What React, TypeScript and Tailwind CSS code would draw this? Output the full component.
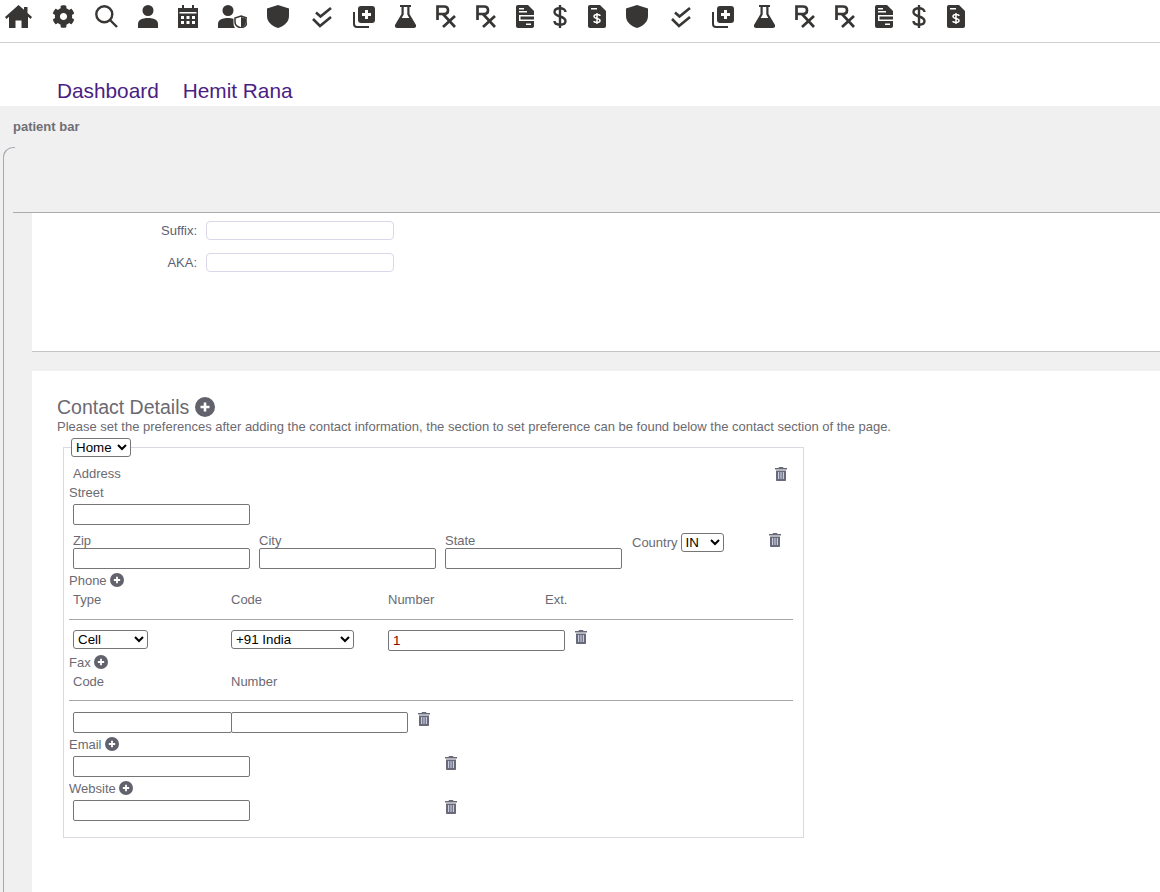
import { FaCog } from "react-icons/fa";

const ink = "#383634";

function Home() {
  return (
    <svg viewBox="0 0 27 23" className="h-[23px] w-[27px]" fill={ink}>
      <path d="M13.5 0L19 4.800V2h3.500v5.900L27 12l-1.500 1.900L23 11.800V23h-6.500v-7.500h-6V23H4V11.800l-2.500 2.100L0 12z" />
    </svg>
  );
}

function Search() {
  return (
    <svg viewBox="0 0 23 23" className="h-[23px] w-[23px]" fill="none" stroke={ink} strokeWidth="2.4">
      <circle cx="9.3" cy="9.3" r="8" />
      <path d="M15 15l7 7" />
    </svg>
  );
}

function Person() {
  return (
    <svg viewBox="0 0 20 23" className="h-[23px] w-[20px]" fill={ink}>
      <circle cx="10" cy="5.5" r="5.5" />
      <path d="M0 23v-4c0-4 4-6 10-6s10 2 10 6v4z" />
    </svg>
  );
}

function Calendar() {
  return (
    <svg viewBox="0 0 20 23" className="h-[23px] w-[20px]" fill={ink}>
      <path d="M4 0h2v3h8V0h2v3h4v20H0V3h4z" />
      <path
        fill="#fff"
        d="M1.5 7h17v1.5h-17zM3 11h3v3H3zM8.5 11h3v3h-3zM14 11h3v3h-3zM3 16h3v3H3zM8.5 16h3v3h-3zM14 16h3v3h-3z"
      />
    </svg>
  );
}

function PersonShield() {
  return (
    <svg viewBox="0 0 29 23" className="h-[23px] w-[29px]" fill={ink}>
      <circle cx="10" cy="5.5" r="5.5" />
      <path d="M0 23v-4c0-4 4-6 10-6 2 0 4 .2 5.5.8V18c0 2 .6 3.6 1.6 5z" />
      <path d="M23 11l6 2v4c0 3-2.5 5-6 6-3.5-1-6-3-6-6v-4z" fill="#fff" stroke={ink} strokeWidth="1.5" />
      <path d="M23 12v10.5c3-1 5-2.7 5-5.5v-3.5z" />
    </svg>
  );
}

function Shield() {
  return (
    <svg viewBox="0 0 22 23" className="h-[23px] w-[22px]" fill={ink}>
      <path d="M11 0l11 3.5V11c0 6-5 10-11 12C5 21 0 17 0 11V3.5z" />
    </svg>
  );
}

function Checks() {
  return (
    <svg viewBox="-3 0 24 23" className="h-[23px] w-[24px]" fill="none" stroke={ink} strokeWidth="2.6">
      <path d="M4 7.5l4.5 4L19 3" />
      <path d="M1 14l7 7 11-9" />
    </svg>
  );
}

function Library() {
  return (
    <svg viewBox="0 0 22 23" className="h-[23px] w-[22px]">
      <path d="M1 7v12c0 2 1 3 3 3h12" fill="none" stroke={ink} strokeWidth="2" />
      <rect x="5" y="1" width="17" height="17" rx="3" fill={ink} />
      <path d="M12 5h3v3h3v3h-3v3h-3v-3H9V8h3z" fill="#fff" />
    </svg>
  );
}

function Flask() {
  return (
    <svg viewBox="0 0 21 23" className="h-[23px] w-[21px]" fill={ink}>
      <path d="M5 0h11v2h-1.5v7L21 20c.6 1.5-.3 3-2 3H2c-1.700 0-2.6-1.500-2-3L6.500 9V2H5z" />
      <path d="M8.700 2h3.600v7.500l2 3.500H6.700l2-3.500z" fill="#fff" />
    </svg>
  );
}

function Rx() {
  return (
    <svg viewBox="0 0 20 23" className="h-[23px] w-[20px]" fill="none" stroke={ink} strokeWidth="2.7">
      <path d="M1.500 15V1.500H8c2.500 0 4 1.500 4 3.700s-1.500 3.800-4 3.800H1.500" />
      <path d="M7 9l12 13M19 11L7 22" />
    </svg>
  );
}

function Doc() {
  return (
    <svg viewBox="0 0 18 23" className="-mr-[1px] h-[23px] w-[18px]" fill={ink}>
      <path d="M2 0h10l6 6v15c0 1.200-.8 2-2 2H2c-1.200 0-2-.8-2-2V2C0 .8.800 0 2 0z" />
      <path fill="#fff" d="M3 3h5v1.500H3zM3 6h8v1.500H3zM3 10h15v6H3zM10 18.500h5V20h-5z" />
      <path d="M4.500 11.500H18v3H4.500z" />
    </svg>
  );
}

function Dollar() {
  return (
    <svg viewBox="0 0 14 23" className="mr-[1px] h-[23px] w-[14px]" fill="none" stroke={ink} strokeWidth="2.4">
      <path d="M12.500 7c0-2.500-2.500-3.700-5.500-3.700S1.500 4.500 1.500 7c0 5.500 11 3.500 11 9 0 2.500-2.500 3.700-5.500 3.700S1.500 18.500 1.500 16" />
      <path d="M7 0v23" />
    </svg>
  );
}

function DocDollar() {
  return (
    <svg viewBox="0 0 18 23" className="h-[23px] w-[18px]" fill={ink}>
      <path d="M2 0h10l6 6v15c0 1.200-.8 2-2 2H2c-1.200 0-2-.8-2-2V2C0 .8.800 0 2 0z" />
      <path fill="#fff" d="M3 3h6v1.500H3z" />
      <path
        fill="none"
        stroke="#fff"
        strokeWidth="1.500"
        d="M12 11c0-1-1.200-1.500-3-1.500S6 10 6 11.500c0 2.500 6 1.500 6 4 0 1.500-1.200 2-3 2s-3-.5-3-1.500M9 8v11"
      />
    </svg>
  );
}

function Plus({ size = "h-[14px] w-[14px]" }: { size?: string }) {
  return (
    <svg viewBox="0 0 20 20" className={size}>
      <circle cx="10" cy="10" r="10" fill="#62626c" />
      <path d="M8.700 5.500h2.600v3.200h3.200v2.600h-3.200v3.200H8.700v-3.200H5.500V8.700h3.200z" fill="#fff" />
    </svg>
  );
}

function Trash() {
  return (
    <svg viewBox="0 0 12 14" className="h-[14px] w-[12px]" fill="#686a7a">
      <path d="M4 0h4l.5 1H12v1.500H0V1h3.500z" />
      <path d="M1 3.500h10V13c0 .6-.4 1-1 1H2c-.6 0-1-.4-1-1z" />
      <path fill="#c9cbe0" d="M3 5h1.200v7H3zM5.400 5h1.200v7H5.400zM7.800 5H9v7H7.800z" />
    </svg>
  );
}

function Input({ width = "w-[177px]", value }: { width?: string; value?: string }) {
  return (
    <input
      readOnly
      value={value ?? ""}
      className={`${width} h-[21px] rounded-[2px] border border-[#767676] bg-white px-1 text-[13.33px] text-[#8b0000]`}
    />
  );
}

function Select({ width, options }: { width: string; options: string[] }) {
  return (
    <select className={`${width} h-[19px] rounded-[3px] border border-[#767676] bg-white text-[13.33px] text-black`}>
      {options.map((o) => (
        <option key={o}>{o}</option>
      ))}
    </select>
  );
}

function Heading({ title }: { title: string }) {
  return (
    <div className="flex h-[14px] items-start gap-[3px] leading-[16px]">
      {title}
      <Plus />
    </div>
  );
}

export default function App() {
  return (
    <div className="flex h-[892px] flex-col overflow-hidden bg-white font-['Liberation_Sans',Arial,sans-serif] text-[13px] text-[#6b6a72]">
      <nav className="flex h-[43px] items-start gap-5 border-b border-[#d0d0d0] pl-[5px] pt-[5px]">
        <Home />
        <FaCog className="h-[23px] w-[23px]" color={ink} />
        <Search />
        <Person />
        <Calendar />
        <PersonShield />
        <Shield />
        <Checks />
        <Library />
        <Flask />
        <Rx />
        <Rx />
        <Doc />
        <Dollar />
        <DocDollar />
        <Shield />
        <Checks />
        <Library />
        <Flask />
        <Rx />
        <Rx />
        <Doc />
        <Dollar />
        <DocDollar />
      </nav>

      <div className="flex h-[63px] items-end gap-6 pb-[3px] pl-[57px] text-[20.8px] leading-[24px] text-[#4b1d83]">
        <span>Dashboard</span>
        <span>Hemit Rana</span>
      </div>

      <main className="flex min-h-0 flex-1 flex-col bg-[#f0f0f0]">
        <div className="h-[41px] pl-[13px] pt-[14px] text-[13px] font-bold leading-[14px] text-[#6f6e76]">patient bar</div>

        <div className="relative ml-[3px] flex min-h-0 flex-1 flex-col rounded-tl-[10px] border-l border-t border-l-[#a9a9b5] border-t-transparent pl-[9px]">
          <span className="absolute -left-px -top-px h-[12px] w-[12px] rounded-tl-[10px] border-l border-t border-[#a9a9b5] border-b-transparent border-r-transparent" />
          <div className="h-[65px] border-b border-[#ababab]" />

          <div className="ml-[19px] flex min-h-0 flex-1 flex-col">
            <section className="h-[139px] border-b border-[#c4c4c4] bg-white pt-2">
              <div className="flex items-center">
                <label className="w-[174px] pr-[9px] text-right text-[#5e6072]">Suffix:</label>
                <input readOnly className="h-[19px] w-[188px] rounded-[4px] border border-[#d9d7e8] bg-white" />
              </div>
              <div className="mt-[12px] flex items-center">
                <label className="w-[174px] pr-[9px] text-right text-[#5e6072]">AKA:</label>
                <input readOnly className="h-[19px] w-[188px] rounded-[4px] border border-[#d9d7e8] bg-white" />
              </div>
            </section>

            <div className="h-[19px]" />

            <section className="flex-1 bg-white pl-[25px] pt-[25px]">
              <div className="flex h-[22px] items-center gap-[6px] text-[19.5px] leading-[22px]">
                Contact Details
                <Plus size="h-[20px] w-[20px]" />
              </div>
              <p className="mt-[2px] h-[14px] whitespace-nowrap leading-[14px]">
                Please set the preferences after adding the contact information, the section to set preference can be found below the
                contact section of the page.
              </p>

              <fieldset className="ml-[6px] mt-[4px] w-[741px] border border-[#d9d9e3] pb-[16px] pl-[5px]">
                <legend className="ml-[2px]">
                  <Select width="w-[60px] block" options={["Home"]} />
                </legend>

                <div className="mt-[10px] flex h-[14px] items-center justify-between pl-1 pr-[16px] leading-[14px]">
                  Address
                  <Trash />
                </div>
                <div className="mt-[5px] h-[14px] leading-[14px]">Street</div>
                <div className="mt-[4px] pl-1">
                  <Input />
                </div>

                <div className="mt-2 flex items-start gap-[9px] pl-1">
                  <div className="flex flex-col">
                    <span className="h-[15px] leading-[16px]">Zip</span>
                    <Input />
                  </div>
                  <div className="flex flex-col">
                    <span className="h-[15px] leading-[16px]">City</span>
                    <Input />
                  </div>
                  <div className="flex flex-col">
                    <span className="h-[15px] leading-[16px]">State</span>
                    <Input />
                  </div>
                  <div className="ml-[1px] flex items-center gap-[3px]">
                    <span>Country</span>
                    <Select width="w-[43px]" options={["IN"]} />
                    <span className="ml-[42px] -mt-[6px]">
                      <Trash />
                    </span>
                  </div>
                </div>

                <div className="mt-1">
                  <Heading title="Phone" />
                </div>
                <div className="mt-[5px] grid h-[14px] grid-cols-[158px_157px_157px_60px] pl-1 leading-[16px]">
                  <span>Type</span>
                  <span>Code</span>
                  <span>Number</span>
                  <span>Ext.</span>
                </div>
                <hr className="mr-[10px] mt-[13px] border-[#a8a8a8]" />
                <div className="mt-[10px] flex items-start pl-1">
                  <Select width="w-[75px] mr-[83px]" options={["Cell"]} />
                  <Select width="w-[123px] mr-[34px]" options={["+91 India"]} />
                  <Input value="1" />
                  <span className="ml-[10px]">
                    <Trash />
                  </span>
                </div>

                <div className="mt-1">
                  <Heading title="Fax" />
                </div>
                <div className="mt-[5px] grid h-[14px] grid-cols-[158px_100px] pl-1 leading-[16px]">
                  <span>Code</span>
                  <span>Number</span>
                </div>
                <hr className="mr-[10px] mt-3 border-[#a8a8a8]" />
                <div className="mt-[11px] flex items-start pl-1">
                  <Input width="w-[159px]" />
                  <Input width="w-[177px] -ml-[1px]" />
                  <span className="ml-[10px]">
                    <Trash />
                  </span>
                </div>

                <div className="mt-1">
                  <Heading title="Email" />
                </div>
                <div className="mt-[5px] flex items-start pl-1">
                  <Input />
                  <span className="ml-[195px]">
                    <Trash />
                  </span>
                </div>

                <div className="mt-1">
                  <Heading title="Website" />
                </div>
                <div className="mt-[5px] flex items-start pl-1">
                  <Input />
                  <span className="ml-[195px]">
                    <Trash />
                  </span>
                </div>
              </fieldset>
            </section>
          </div>
        </div>
      </main>
    </div>
  );
}
